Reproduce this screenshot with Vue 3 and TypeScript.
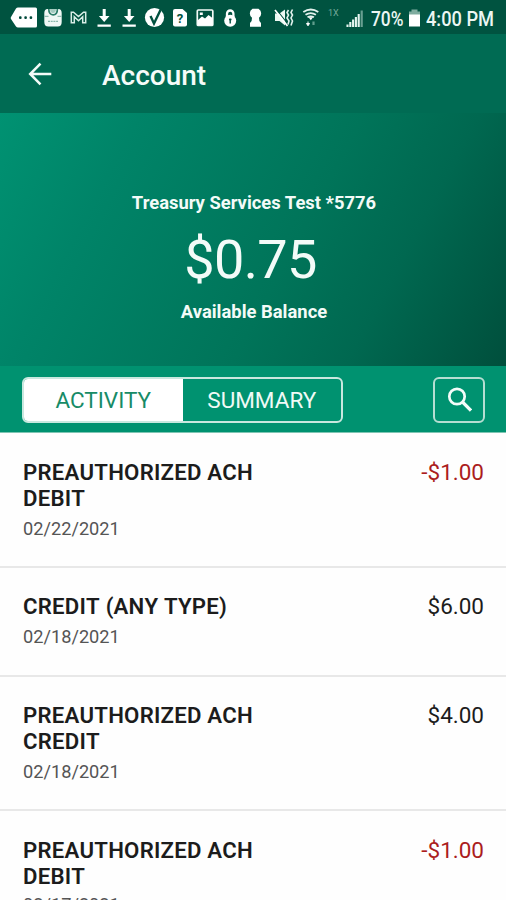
<script setup lang="ts">
import { ref } from 'vue'

interface Transaction {
  id: number
  title: string
  date: string
  amount: string
}

type Tab = 'ACTIVITY' | 'SUMMARY'

const tabs: Tab[] = ['ACTIVITY', 'SUMMARY']
const activeTab = ref<Tab>('ACTIVITY')

const transactions: Transaction[] = [
  { id: 1, title: 'PREAUTHORIZED ACH DEBIT', date: '02/22/2021', amount: '-$1.00' },
  { id: 2, title: 'CREDIT (ANY TYPE)', date: '02/18/2021', amount: '$6.00' },
  { id: 3, title: 'PREAUTHORIZED ACH CREDIT', date: '02/18/2021', amount: '$4.00' },
  { id: 4, title: 'PREAUTHORIZED ACH DEBIT', date: '02/17/2021', amount: '-$1.00' },
]
</script>

<template>
  <div class="screen">
    <div class="status">
      <!-- message bubble -->
      <svg width="40" height="34" viewBox="0 0 40 34">
        <path d="M18 7.5h17.500q1.500 0 1.500 1.500v17q0 1.500-1.500 1.500H18q-1.200 0-2-1l-5-7.500q-.7-1 0-2L16 8.500q.8-1 2-1z" fill="#fff" />
        <g fill="#00493a"><rect x="19" y="16.200" width="2.600" height="2.800" rx="1" /><rect x="24.300" y="16.200" width="2.600" height="2.800" rx="1" /><rect x="29.600" y="16.200" width="2.600" height="2.800" rx="1" /></g>
      </svg>
      <!-- shopping bag -->
      <svg width="26" height="34" viewBox="40 0 26 34">
        <path d="M47.500 9h11q3 0 3.200 4v9q0 4.500-4 4.500h-9.400q-4 0-4-4.500v-9Q44.500 9 47.500 9z" fill="#f0f8f5" />
        <path d="M48.800 9q0 5.800 4.300 5.800T57.400 9" fill="none" stroke="#2c7d69" stroke-width="1.700" />
        <path d="M50 9h6q0 4-3 4t-3-4z" fill="#a5cbc0" />
        <path d="M44.500 16.300h4M57.500 16.300h4" stroke="#7bada0" stroke-width="1" />
        <path d="M48 21.300h10" stroke="#8ab8ac" stroke-width="1.300" stroke-dasharray="2 .7" />
      </svg>
      <!-- mail -->
      <svg width="25" height="34" viewBox="66 0 25 34">
        <path d="M71.300 22.800V12.200h2.200l5 4.300 5-4.300h2.200v10.600h-3v-6l-4.200 4-4.200-4v6z" fill="none" stroke="#d9eee7" stroke-width="1.500" />
      </svg>
      <!-- downloads -->
      <svg v-for="n in 2" :key="n" width="25" height="34" viewBox="91 0 25 34">
        <path d="M102.700 9h3v7h3.800l-5.300 6-5.300-6h3.800zM97.500 24.500h13.300v2.300H97.500z" fill="#fff" />
      </svg>
      <!-- check badge -->
      <svg width="26" height="34" viewBox="141 0 26 34">
        <circle cx="154.500" cy="17.500" r="9.600" fill="#fff" />
        <path d="M150.500 16l3.500 7.500L160.500 10" fill="none" stroke="#00513f" stroke-width="2.400" />
      </svg>
      <!-- unknown file -->
      <svg width="26" height="34" viewBox="167 0 26 34">
        <path d="M175 9h7.500l4.500 4v11.500q0 2-2 2h-10q-2 0-2-2V11q0-2 2-2z" fill="#fff" />
        <text class="question" x="180" y="22.500" text-anchor="middle">?</text>
      </svg>
      <!-- picture -->
      <svg width="25" height="34" viewBox="193 0 25 34">
        <rect x="197.300" y="10" width="15.500" height="15.500" rx="1" fill="#00513f" stroke="#f4fbf8" stroke-width="1.700" />
        <path d="M198 25v-5l4-3.500 3 2 3.500-3.500 4 3v7z" fill="#fff" />
        <path d="M199.800 12.500h3V15h-3z" fill="#fff" />
      </svg>
      <!-- padlock -->
      <svg width="25" height="34" viewBox="218 0 25 34">
        <path d="M227 17v-3.300a3.200 3.200 0 0 1 6.400 0V17" fill="none" stroke="#fff" stroke-width="2.300" />
        <circle cx="230.200" cy="20.700" r="6" fill="#fff" />
        <path d="M230.200 18.500v5M229 19.500h2.500" stroke="#00513f" stroke-width="1.400" />
      </svg>
      <!-- keyhole -->
      <svg width="25" height="34" viewBox="243 0 25 34">
        <path d="M252.500 8.800h6q2.700 1.700 2.700 4.400 0 2.800-2.200 4.600l.4 3.200 1.600 2v3.700h-11V23l1.600-2 .4-3.200q-2.200-1.800-2.200-4.600 0-2.700 2.700-4.400z" fill="#fff" />
      </svg>
      <!-- muted with vibration -->
      <svg width="29" height="34" viewBox="268 0 29 34">
        <path d="M275 13.500h4.500l5.500-4v16l-5.500-4.500H275z" fill="#edf8f3" />
        <path d="M276.500 9.500l12 15.500" stroke="#00513f" stroke-width="1.200" />
        <path d="M275 10l12.500 16" stroke="#fff" stroke-width="1.700" />
        <path d="M288.500 10l-1.500 2.500 1.500 2.500-1.500 3 2 3-1 3.500M292.500 9.500l-1.500 3 1.500 2.500-1.500 3 1.500 3-1.500 4.500" fill="none" stroke="#e2f2ed" stroke-width="1.600" />
      </svg>
      <!-- wifi -->
      <svg width="27" height="34" viewBox="297 0 27 34">
        <path d="M303.300 12q7.500-5 15 0M305.500 14.800q5.200-3.500 10.400 0M307.500 17.300q3.200-2 6.400 0" fill="none" stroke="#e2f2ed" stroke-width="1.800" />
        <path d="M308.500 17.200h4.500l-2.200 3z" fill="#fff" />
        <path d="M308 21.500v3M306.500 23.500l1.500 2.300 1.500-2.300z" fill="#fff" stroke="#fff" stroke-width="1" />
        <path d="M313.500 25v-3.500" fill="none" stroke="#629e8e" stroke-width="2.200" />
      </svg>
      <span class="network">1X</span>
      <!-- signal strength -->
      <svg width="23" height="34" viewBox="344 0 23 34">
        <path d="M347.500 27v-2.500M350.300 27v-5M353.100 27v-7.500M355.900 27V17M358.700 27V14" stroke="#e5f4ef" stroke-width="2.100" />
        <path d="M361.700 27V10.500" stroke="#689f91" stroke-width="2.200" />
      </svg>
      <span class="percent"><span class="narrow">70%</span></span>
      <svg width="18" height="34" viewBox="405 0 18 34">
        <path d="M409 11.500h2.500V9.500h6v2h2.500V15h-11z" fill="#7fac9f" />
        <rect x="409" y="14.500" width="11" height="12" fill="#fff" />
      </svg>
      <span class="clock"><span class="narrow">4:00 PM</span></span>
    </div>

    <header class="appbar">
      <svg class="back" width="24" height="24" viewBox="0 0 24 24">
        <path d="M23.300 12H2.500M12.500 1.700L2.200 12l10.300 10.300" fill="none" stroke="#f3fbf8" stroke-width="2.500" />
      </svg>
      <h1>Account</h1>
    </header>

    <section class="hero">
      <div class="account">Treasury Services Test *5776</div>
      <div class="balance">$0.75</div>
      <div class="caption">Available Balance</div>
    </section>

    <nav class="toolbar">
      <div class="tabs">
        <button
          v-for="tab in tabs"
          :key="tab"
          :class="['tab', tab.toLowerCase(), { active: tab === activeTab }]"
          @click="activeTab = tab"
        ><span>{{ tab }}</span></button>
      </div>
      <button class="search" aria-label="Search">
        <svg width="26" height="26" viewBox="0 0 26 26">
          <circle cx="11" cy="9.500" r="7.700" fill="none" stroke="#f4fcf9" stroke-width="2.700" />
          <path d="M16.500 15l8.500 8.500" stroke="#f4fcf9" stroke-width="3.200" />
        </svg>
      </button>
    </nav>

    <main class="list">
      <article v-for="item in transactions" :key="item.id" class="row">
        <div class="details">
          <div class="title">{{ item.title }}</div>
          <div class="date">{{ item.date }}</div>
        </div>
        <div :class="['amount', { negative: item.amount.startsWith('-') }]">{{ item.amount }}</div>
      </article>
    </main>
  </div>
</template>

<style>
body {
  margin: 0;
  overflow: hidden;
}
</style>

<style scoped>
.screen {
  width: 506px;
  height: 900px;
  overflow: hidden;
  display: flex;
  flex-direction: column;
  background: #fefefe;
  font-family: Roboto, "Liberation Sans", sans-serif;
  color: #1c1c1c;
}
.screen > * {
  box-sizing: border-box;
  flex-shrink: 0;
}
svg {
  display: block;
  flex: none;
}
.status {
  height: 34px;
  display: flex;
  background: #005340;
  color: #ecf7f3;
  line-height: 38px;
  white-space: nowrap;
}
.question {
  font: 700 13px Roboto, sans-serif;
  fill: #00513f;
}
.network {
  width: 20px;
  padding-left: 4px;
  box-sizing: border-box;
  font-size: 9px;
  line-height: 26px;
  color: #75a99b;
}
.percent {
  width: 38px;
  padding-left: 4px;
  box-sizing: border-box;
}
.clock {
  padding-left: 3px;
}
.narrow {
  display: inline-block;
  font-size: 20.5px;
  font-weight: 500;
  transform: scaleX(0.89);
  transform-origin: left center;
}
.percent .narrow {
  transform: scaleX(0.845);
}
.appbar {
  height: 79px;
  display: flex;
  align-items: center;
  padding-left: 28px;
  background: #006b53;
  color: #f5fcf9;
}
.appbar h1 {
  margin: 4px 0 0 50px;
  font-size: 28px;
  font-weight: 500;
  line-height: 32px;
}
.hero {
  height: 253px;
  padding-top: 78px;
  background: linear-gradient(118deg, #009272 0%, #008468 22%, #007459 57%, #006850 75%, #004f3c 100%);
  color: #f3fbf8;
  text-align: center;
}
.account,
.caption {
  font-size: 18.4px;
  font-weight: 700;
  line-height: 24px;
  padding-left: 2px;
}
.balance {
  margin-top: 13px;
  padding-right: 5px;
  font-size: 54px;
  line-height: 64px;
  letter-spacing: -0.6px;
}
.caption {
  margin-top: 8px;
}
.toolbar {
  height: 67px;
  display: flex;
  align-items: center;
  justify-content: space-between;
  padding: 1px 21px 0 22px;
  background: #009270;
  border-bottom: 1px solid #7fc5b3;
}
.tabs {
  width: 321px;
  height: 46px;
  box-sizing: border-box;
  display: flex;
  border: 2px solid #c9e8df;
  border-radius: 6px;
  overflow: hidden;
}
.tab {
  flex: 1;
  padding: 1px 0 0;
  border: 0;
  background: transparent;
  color: #f0faf6;
  font: 400 22.5px Roboto, sans-serif;
}
.tab.active {
  background: #fff;
  color: #178b67;
}
.search {
  width: 52px;
  height: 46px;
  box-sizing: border-box;
  display: grid;
  place-items: center;
  padding: 0;
  border: 2px solid #b5ded2;
  border-radius: 6px;
  background: transparent;
}
.list {
  padding-top: 0.5px;
}
.row {
  display: flex;
  justify-content: space-between;
  padding: 25.3px 22px 24.4px 23px;
  border-bottom: 2px solid #e8e8e8;
}
.details {
  width: 260px;
}
.title {
  font-size: 22.2px;
  font-weight: 600;
  font-kerning: none;
  letter-spacing: 0.22px;
  line-height: 26.3px;
}
.date {
  margin-top: 3.4px;
  font-size: 18.2px;
  line-height: 27px;
  color: #555;
}
.row:last-child .date {
  margin-top: 2px;
}
.amount {
  font-size: 22.5px;
  line-height: 26px;
}
.amount.negative {
  color: #ab1d1d;
}
</style>
